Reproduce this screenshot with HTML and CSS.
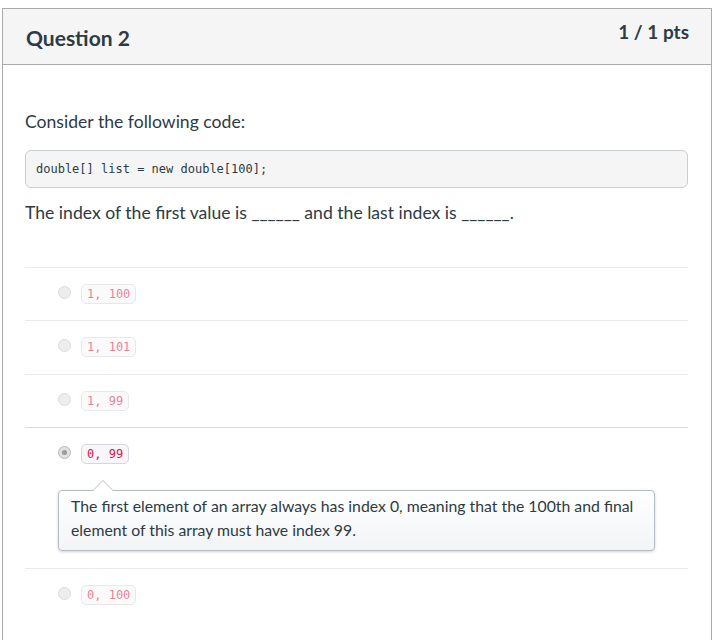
FILE: index.html
```html
<!DOCTYPE html>
<html>
<head>
<meta charset="utf-8">
<link rel="stylesheet" href="styles.css">
</head>
<body>
<div class="card">
  <div class="header">
    <h2 class="title">Question 2</h2>
    <div class="pts">1 / 1 pts</div>
  </div>
  <div class="body">
    <p class="text first">Consider the following code:</p>
    <pre class="code">double[] list = new double[100];</pre>
    <p class="text">The index of the first value is ______ and the last index is ______.</p>
    <ul class="answers">
      <li class="answer faded"><span class="radio"></span><code class="chip">1, 100</code></li>
      <li class="answer faded"><span class="radio"></span><code class="chip">1, 101</code></li>
      <li class="answer faded"><span class="radio"></span><code class="chip">1, 99</code></li>
      <li class="answer selected">
        <div class="row"><span class="radio on"></span><code class="chip">0, 99</code></div>
        <div class="feedback">The first element of an array always has index 0, meaning that the 100th and final element of this array must have index 99.</div>
      </li>
      <li class="answer faded"><span class="radio"></span><code class="chip">0, 100</code></li>
    </ul>
  </div>
</div>
</body>
</html>
```

FILE: styles.css
```css
html, body {
  margin: 0;
  padding: 0;
  background: #fff;
}
body {
  font-family: Lato, "Open Sans", sans-serif;
  color: #2d3b45;
  padding: 8px 0 0 2px;
}
.card {
  width: 710px;
  box-sizing: border-box;
  border: 1px solid #aaaaaa;
  border-bottom: none;
  min-height: 640px;
}
.header {
  display: flex;
  justify-content: space-between;
  align-items: flex-start;
  height: 55px;
  background: #f5f5f5;
  border-bottom: 1px solid #aaaaaa;
  padding: 0 22px 0 23px;
}
.title {
  margin: 0;
  font-size: 21px;
  font-weight: 700;
  line-height: 55px;
  padding-top: 1px;
}
.pts {
  font-size: 19px;
  font-weight: 700;
  padding-top: 11px;
  line-height: 24px;
}
.body {
  padding: 0 23px 0 22px;
}
.text {
  margin: 0;
  font-size: 17.6px;
  line-height: 26px;
}
.text.first {
  margin-top: 44px;
}
.code {
  margin: 15px 0 12px;
  background: #f5f5f5;
  border: 1px solid #c7cdd1;
  border-radius: 6px;
  padding: 0 10px;
  height: 36px;
  line-height: 36px;
  font-family: "DejaVu Sans Mono", "Liberation Mono", monospace;
  font-size: 12px;
  color: #2d3b45;
}
.answers {
  list-style: none;
  margin: 41px 0 0;
  padding: 0;
}
.answer {
  border-top: 1px solid #e8eaec;
  padding: 16px 0 16px 33px;
  display: flex;
  flex-direction: column;
}
.answer.faded {
  flex-direction: row;
  align-items: center;
}
.answer:nth-child(2) {
  padding-bottom: 17px;
}
.answer.selected {
  border-top-color: #dcdcdc;
  padding-bottom: 17px;
}
.row {
  display: flex;
  align-items: center;
}
.faded .chip {
  opacity: 0.55;
}
.faded .radio {
  opacity: 0.75;
}
.radio {
  width: 13px;
  height: 13px;
  border-radius: 50%;
  border: 1px solid #cfcfcf;
  background: #e8e8e8;
  margin-right: 10px;
  margin-top: -4px;
  flex: none;
  position: relative;
  box-sizing: border-box;
}
.radio.on {
  background: #e0e0e0;
  border-color: #b8b8b8;
}
.radio.on::after {
  content: "";
  position: absolute;
  left: 3px;
  top: 3px;
  width: 5px;
  height: 5px;
  border-radius: 50%;
  background: #9a9a9a;
}
.chip {
  font-family: "DejaVu Sans Mono", "Liberation Mono", monospace;
  font-size: 12px;
  line-height: 18px;
  color: #dd1144;
  background: #f7f7f9;
  border: 1px solid #d6d6dc;
  border-radius: 5px;
  padding: 0 5px;
}
.feedback {
  position: relative;
  margin: 26px 0 0 0;
  width: 597px;
  box-sizing: border-box;
  padding: 3px 12px 8px;
  font-size: 15.8px;
  line-height: 24px;
  color: #2d3b45;
  background: linear-gradient(#ffffff, #f2f4f6);
  border: 1px solid #b5bcc4;
  border-radius: 4px;
  box-shadow: 0 1px 3px rgba(0, 0, 0, 0.18);
}
.feedback::before {
  content: "";
  position: absolute;
  left: 33px;
  top: -11px;
  width: 0;
  height: 0;
  border-left: 11px solid transparent;
  border-right: 11px solid transparent;
  border-bottom: 11px solid #b5bcc4;
}
.feedback::after {
  content: "";
  position: absolute;
  left: 34px;
  top: -10px;
  width: 0;
  height: 0;
  border-left: 10px solid transparent;
  border-right: 10px solid transparent;
  border-bottom: 10px solid #ffffff;
}
```
